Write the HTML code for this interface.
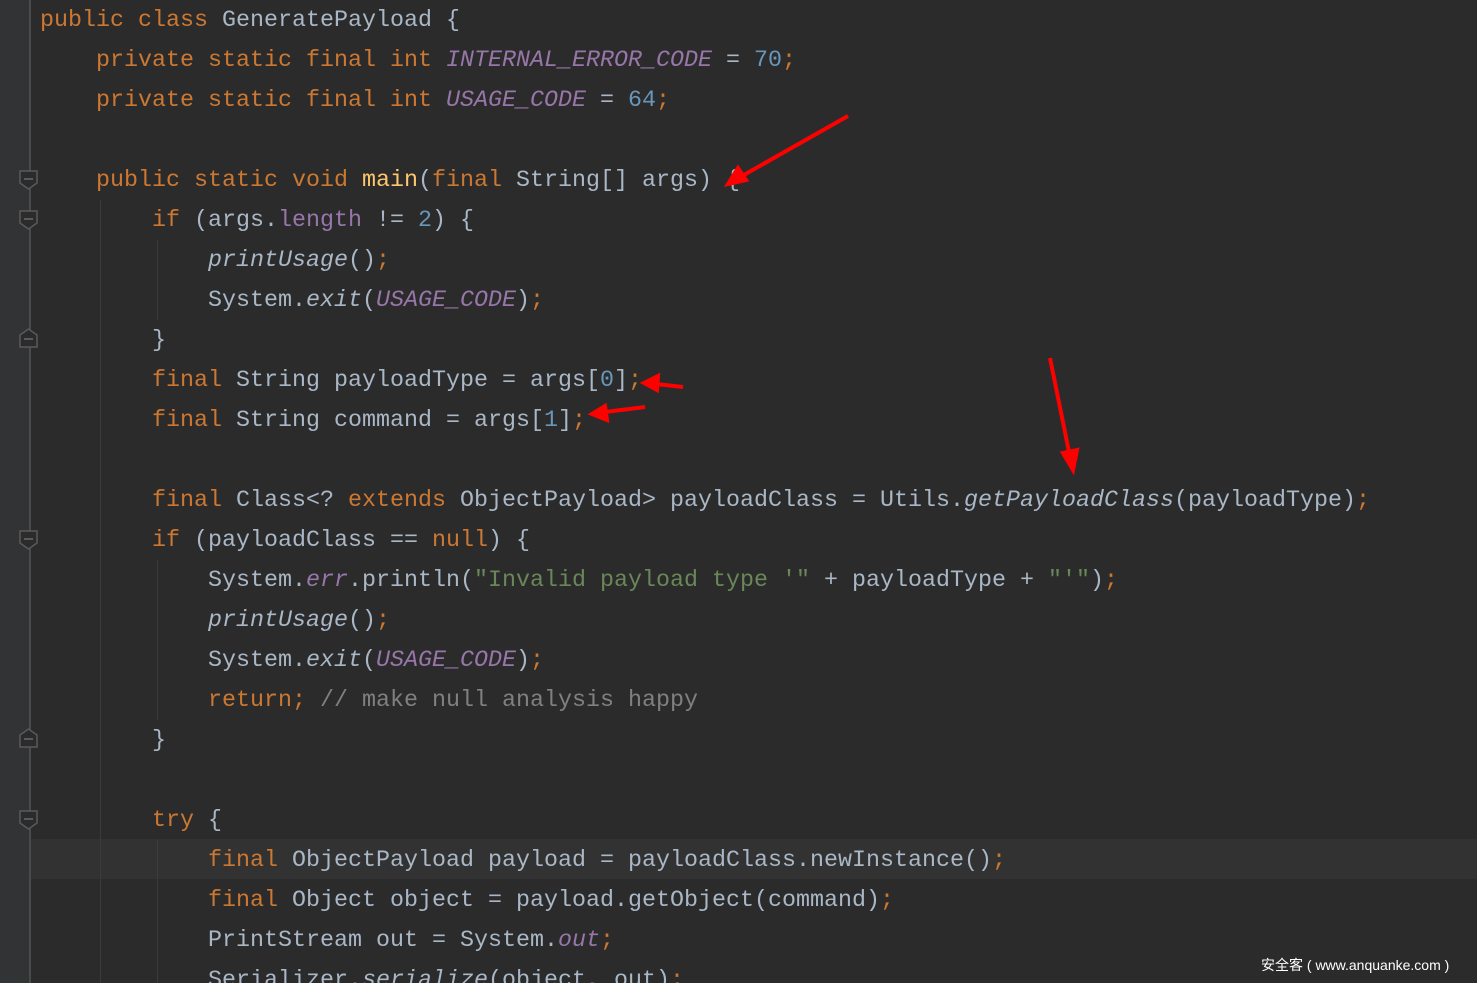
<!DOCTYPE html>
<html style="overflow:hidden;height:983px"><head><meta charset="utf-8"><style>
html,body{overflow:hidden}
body{margin:0;width:1477px;height:983px;overflow:hidden;background:#2b2b2b;position:relative;font-family:"Liberation Mono",monospace;}
.g{position:absolute;left:0;top:0;width:29px;height:983px;background:#313335;}
.gl{position:absolute;left:29px;top:0;width:2px;height:983px;background:#4a4a4a;}
.hl{position:absolute;left:31px;top:839px;width:1446px;height:40px;background:#323232;}
.ig{position:absolute;width:1px;background:#3b3b3b;}
.l{position:absolute;left:40px;height:40px;line-height:40px;margin-top:2px;font-size:23.33px;color:#a9b7c6;white-space:pre;}
.k{color:#cc7832}.c{color:#9876aa;font-style:italic}.n{color:#6897bb}.s{color:#6a8759}.cm{color:#808080}.m{color:#ffc66d}.i{font-style:italic}.p{color:#9876aa}
.wm{position:absolute;left:1261px;top:955px;font-family:"Liberation Sans","Noto Sans CJK SC",sans-serif;font-size:14px;color:#fff;}
</style></head><body>
<div class="g"></div><div class="gl"></div><div class="hl"></div>
<div class="ig" style="left:100px;top:200px;height:783px"></div>
<div class="ig" style="left:157px;top:240px;height:80px"></div>
<div class="ig" style="left:157px;top:560px;height:160px"></div>
<div class="ig" style="left:157px;top:840px;height:143px"></div>
<svg width="40" height="983" style="position:absolute;left:10px;top:0">
<g fill="#2b2b2b" stroke="#5a5a5a" stroke-width="1.5">
<path d="M10,171 h17 v12 l-8.5,6 l-8.5,-6z"/><path d="M10,211 h17 v12 l-8.5,6 l-8.5,-6z"/>
<path d="M10,531 h17 v12 l-8.5,6 l-8.5,-6z"/><path d="M10,811 h17 v12 l-8.5,6 l-8.5,-6z"/>
<path d="M10,347 h17 v-12 l-8.5,-6 l-8.5,6z"/><path d="M10,747 h17 v-12 l-8.5,-6 l-8.5,6z"/>
</g>
<g stroke="#6a6a6a" stroke-width="1.5"><path d="M14,179h9M14,219h9M14,539h9M14,819h9M14,339h9M14,739h9"/></g>
</svg>
<div class="l" style="top:-1px"><span class="k">public class </span>GeneratePayload {</div>
<div class="l" style="top:39px">    <span class="k">private static final int </span><span class="c">INTERNAL_ERROR_CODE</span> = <span class="n">70</span><span class="k">;</span></div>
<div class="l" style="top:79px">    <span class="k">private static final int </span><span class="c">USAGE_CODE</span> = <span class="n">64</span><span class="k">;</span></div>
<div class="l" style="top:159px">    <span class="k">public static void </span><span class="m">main</span>(<span class="k">final </span>String[] args) {</div>
<div class="l" style="top:199px">        <span class="k">if </span>(args.<span class="p">length</span> != <span class="n">2</span>) {</div>
<div class="l" style="top:239px">            <span class="i">printUsage</span>()<span class="k">;</span></div>
<div class="l" style="top:279px">            System.<span class="i">exit</span>(<span class="c">USAGE_CODE</span>)<span class="k">;</span></div>
<div class="l" style="top:319px">        }</div>
<div class="l" style="top:359px">        <span class="k">final </span>String payloadType = args[<span class="n">0</span>]<span class="k">;</span></div>
<div class="l" style="top:399px">        <span class="k">final </span>String command = args[<span class="n">1</span>]<span class="k">;</span></div>
<div class="l" style="top:479px">        <span class="k">final </span>Class&lt;? <span class="k">extends </span>ObjectPayload&gt; payloadClass = Utils.<span class="i">getPayloadClass</span>(payloadType)<span class="k">;</span></div>
<div class="l" style="top:519px">        <span class="k">if </span>(payloadClass == <span class="k">null</span>) {</div>
<div class="l" style="top:559px">            System.<span class="c">err</span>.println(<span class="s">"Invalid payload type '"</span> + payloadType + <span class="s">"'"</span>)<span class="k">;</span></div>
<div class="l" style="top:599px">            <span class="i">printUsage</span>()<span class="k">;</span></div>
<div class="l" style="top:639px">            System.<span class="i">exit</span>(<span class="c">USAGE_CODE</span>)<span class="k">;</span></div>
<div class="l" style="top:679px">            <span class="k">return; </span><span class="cm">// make null analysis happy</span></div>
<div class="l" style="top:719px">        }</div>
<div class="l" style="top:799px">        <span class="k">try </span>{</div>
<div class="l" style="top:839px">            <span class="k">final </span>ObjectPayload payload = payloadClass.newInstance()<span class="k">;</span></div>
<div class="l" style="top:879px">            <span class="k">final </span>Object object = payload.getObject(command)<span class="k">;</span></div>
<div class="l" style="top:919px">            PrintStream out = System.<span class="c">out</span><span class="k">;</span></div>
<div class="l" style="top:959px;height:22px;overflow:hidden">            Serializer.<span class="i">serialize</span>(object<span class="k">, </span>out)<span class="k">;</span></div>
<svg width="1477" height="983" style="position:absolute;left:0;top:0">
<g stroke="#f00" stroke-width="4" fill="#f00">
<line x1="848" y1="116" x2="742" y2="176"/><path d="M728,184 l10,-16 l8,12z"/>
<line x1="683" y1="387" x2="656" y2="384"/><path d="M644,383 l14,-7 l-1,14z"/>
<line x1="645" y1="407" x2="605" y2="412"/><path d="M592,414 l13,-8 l2,14z"/>
<line x1="1050" y1="358" x2="1069" y2="452"/><path d="M1073,470 l-10,-17 l14,-3z"/>
</g></svg>
<div class="wm">安全客 ( www.anquanke.com )</div>
</body></html>
